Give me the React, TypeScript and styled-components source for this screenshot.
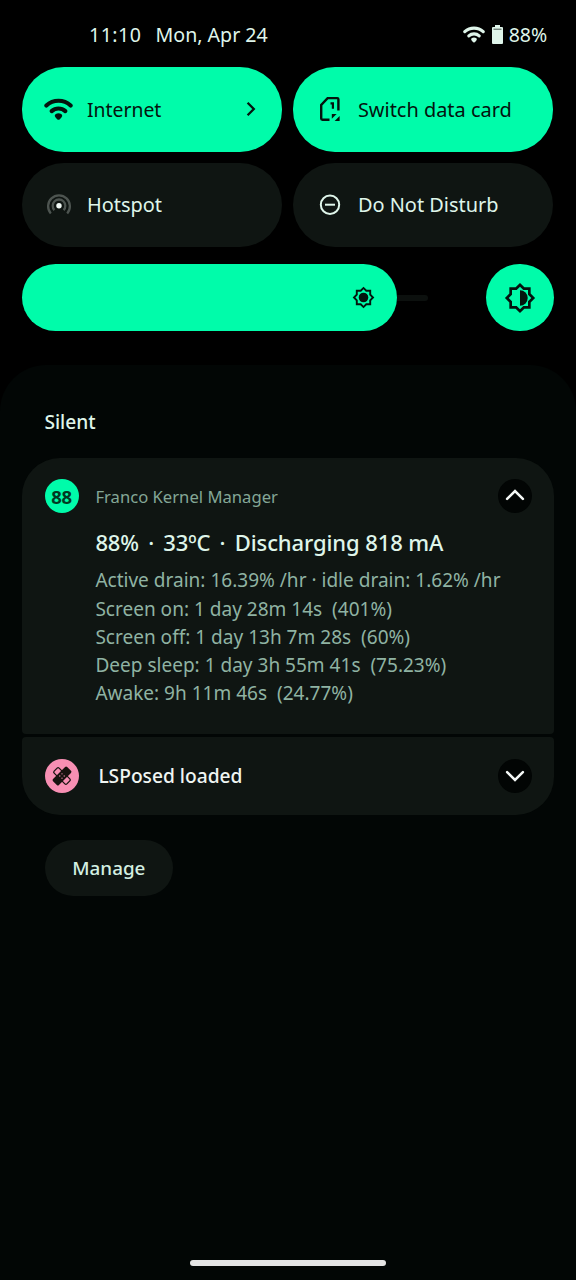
import React from 'react';
import styled, { createGlobalStyle } from 'styled-components';

const accent = '#00fcaa';
const surface = '#0f1512';
const ink = '#04140e';
const pale = '#dff5ea';

const GlobalStyle = createGlobalStyle`
  *, *::before, *::after { box-sizing: border-box; }
  body {
    margin: 0;
    background: #000;
    font-family: 'Noto Sans', 'Open Sans', sans-serif;
    color: ${pale};
  }
  svg { display: block; flex: none; }
`;

const Screen = styled.div`
  width: 576px;
  height: 1280px;
  display: flex;
  flex-direction: column;
  overflow: hidden;
  background: #000;
`;

const StatusBar = styled.header`
  height: 67px;
  padding: 2px 29px 0 89px;
  display: flex;
  align-items: center;
  font-size: 19.6px;
  line-height: 28px;
  white-space: nowrap;
`;

const Clock = styled.span`
  width: 66.5px;
  letter-spacing: 0.45px;
`;

const StatusIcons = styled.div`
  margin-left: auto;
  display: flex;
  align-items: center;
  gap: 7px;
`;

const BatteryGroup = styled.div`
  display: flex;
  align-items: center;
  gap: 6px;
  font-size: 19.5px;
  letter-spacing: -0.1px;
`;

const Tiles = styled.section`
  display: grid;
  grid-template-columns: 260px 260px;
  grid-template-rows: 84.5px 84px;
  column-gap: 11px;
  row-gap: 11.5px;
  padding-left: 22.4px;
`;

const Tile = styled.button<{ $on?: boolean }>`
  border: 0;
  border-radius: 42px;
  padding: 0 22px;
  display: flex;
  align-items: center;
  font-family: inherit;
  text-align: left;
  background: ${(p) => (p.$on ? accent : surface)};
  color: ${(p) => (p.$on ? ink : pale)};
`;

const TileIcon = styled.span`
  width: 29px;
  height: 30px;
  display: grid;
  place-items: center;
`;

const TileLabel = styled.span<{ $size?: number; $drop?: number }>`
  flex: 1;
  padding: ${(p) => p.$drop ?? 0}px 0 0 13.5px;
  font-size: ${(p) => p.$size ?? 19.95}px;
  line-height: 28px;
  white-space: nowrap;
`;

const BrightnessRow = styled.section`
  display: flex;
  align-items: center;
  height: 67px;
  margin-top: 17px;
  padding-left: 22.4px;
`;

const BrightnessFill = styled.div`
  width: 375px;
  height: 67px;
  border-radius: 34px;
  background: ${accent};
  display: flex;
  align-items: center;
  justify-content: flex-end;
  padding-right: 22px;
`;

const BrightnessTrack = styled.div`
  width: 30.5px;
  height: 6px;
  border-radius: 0 3px 3px 0;
  background: #0c100e;
`;

const AutoBrightness = styled.button`
  width: 67.4px;
  height: 67px;
  margin-left: 58.5px;
  padding: 0;
  border: 0;
  border-radius: 50%;
  background: ${accent};
  display: grid;
  place-items: center;
`;

const Shade = styled.main`
  flex: 1;
  margin-top: 34px;
  padding: 0 22.4px 14px;
  border-radius: 46px 46px 0 0;
  background: #020605;
  display: flex;
  flex-direction: column;
`;

const SectionTitle = styled.h2`
  margin: 43px 0 0 22px;
  height: 50px;
  font-size: 19.2px;
  line-height: 28px;
  font-weight: 500;
`;

const Notification = styled.article<{ $last?: boolean }>`
  display: flex;
  align-items: ${(p) => (p.$last ? 'center' : 'flex-start')};
  height: ${(p) => (p.$last ? '78px' : '276px')};
  padding: ${(p) => (p.$last ? '0 22px 0 22.2px' : '21.4px 22px 0 22.2px')};
  border-radius: ${(p) => (p.$last ? '4px 4px 38px 38px' : '38px 38px 4px 4px')};
  background: ${surface};
  & + & { margin-top: 2.6px; }
`;

const AppBadge = styled.div<{ $tone: string }>`
  width: 34px;
  height: 34px;
  flex: none;
  border-radius: 50%;
  display: grid;
  place-items: center;
  background: ${(p) => p.$tone};
  color: #023822;
  font-size: 18.5px;
  line-height: 33px;
  font-weight: 700;
  letter-spacing: -0.2px;
`;

const NotificationBody = styled.div`
  flex: 1;
  padding-left: 16.8px;
  white-space: pre;
`;

const AppName = styled.div`
  font-size: 16.65px;
  line-height: 35px;
  color: #84a797;
`;

const Headline = styled.div`
  margin-top: 11.1px;
  font-size: 22px;
  line-height: 34px;
  font-weight: 500;
  letter-spacing: -0.1px;
`;

const Dot = styled.span`
  margin: 0 3.6px;
`;

const Details = styled.div`
  margin-top: 6.8px;
  font-size: 19.05px;
  line-height: 28.3px;
  color: #8fb3a3;
`;

const ShortTitle = styled.div`
  padding: 1px 0 0 3px;
  font-size: 19.2px;
  line-height: 28px;
  font-weight: 500;
  color: #f0f5f2;
`;

const ExpandButton = styled.button<{ $open?: boolean }>`
  width: 34px;
  height: 34px;
  flex: none;
  margin-left: -34px;
  padding: ${(p) => (p.$open ? '0 0 2px' : '1px 0 0')};
  border: 0;
  border-radius: 50%;
  background: #020504;
  display: grid;
  place-items: center;
`;

const ManageButton = styled.button`
  width: 128.5px;
  height: 56px;
  margin: 25.3px 0 0 22.2px;
  padding: 0;
  border: 0;
  border-radius: 28px;
  background: ${surface};
  color: #d3efe1;
  font-family: inherit;
  font-size: 18.85px;
  line-height: 28px;
  font-weight: 500;
`;

const GestureBar = styled.div`
  width: 196px;
  height: 6px;
  margin: auto auto 0;
  border-radius: 3px;
  background: #e4e4e4;
`;

function WifiIcon({ width }: { width: number }) {
  return (
    <svg width={width} height={width * 0.79} viewBox="0 0 28 22" fill="none" stroke="currentColor" strokeWidth="4" strokeLinecap="round">
      <path d="M2.300 7.200a17.200 17.200 0 0 1 23.400 0" />
      <path d="M7.400 12.600a9.800 9.800 0 0 1 13.200 0" />
      <path d="M14 14.600c2 0 3.600.900 3.600 2.400 0 1-2.400 4-3.600 4s-3.600-3-3.600-4c0-1.500 1.600-2.400 3.600-2.400z" fill="currentColor" stroke="none" />
    </svg>
  );
}

function BatteryIcon() {
  return (
    <svg width="11" height="19" viewBox="0 0 11 19">
      <path d="M3 0h5v2h2q1 0 1 1v15q0 1-1 1H1q-1 0-1-1V3q0-1 1-1h2z" fill="#dff5ea" />
      <path d="M1.500 4.200h8" stroke="#48544e" strokeWidth="1" />
    </svg>
  );
}

function ChevronIcon({ dir }: { dir: 'up' | 'down' }) {
  return (
    <svg width="20" height="12" viewBox="0 0 20 12" fill="none" stroke="#f4f8f6" strokeWidth="2.500" strokeLinecap="round" strokeLinejoin="miter">
      <path d={dir === 'up' ? 'M2.100 9.900 10 2l7.900 7.900' : 'M2.100 2.100 10 10l7.900-7.900'} />
    </svg>
  );
}

function ArrowIcon() {
  return (
    <svg width="18" height="18" viewBox="0 0 18 18" fill="none" stroke="currentColor" strokeWidth="2.300">
      <path d="M5.600 2.800 11.800 9 5.600 15.200" />
    </svg>
  );
}

function SimSwitchIcon() {
  return (
    <svg width="22" height="26" viewBox="0 0 22 26" fill="none" stroke="currentColor" strokeWidth="2.400">
      <path d="M19.400 14.500V3.300q0-1.200-1.200-1.200H8.600L2.200 9v13.600q0 1.200 1.200 1.200h7.100" />
      <path d="M11.500 7.300h2.400v5.500" strokeWidth="2.200" />
      <path d="M12.800 18h4.800l-4.800 4.800z" fill="currentColor" stroke="none" />
      <path d="M20.600 20v5h-5z" fill="currentColor" stroke="none" />
    </svg>
  );
}

function HotspotIcon() {
  return (
    <svg width="26" height="24" viewBox="0 0 26 24" fill="none" stroke="#4d5450" strokeWidth="2.300">
      <path d="M4.800 20.400a10.900 10.900 0 1 1 16.400 0" />
      <path d="M8.400 17.100a6.300 6.300 0 1 1 9.200 0" />
      <circle cx="13" cy="12.700" r="2.700" fill="#f2faf6" stroke="none" />
    </svg>
  );
}

function DoNotDisturbIcon() {
  return (
    <svg width="22" height="22" viewBox="0 0 22 22" fill="none" stroke="currentColor" strokeWidth="2">
      <circle cx="11" cy="10.700" r="9.200" />
      <path d="M6 10.700h10" />
    </svg>
  );
}

const sunOutline = 'M20 8.690V4h-4.690L12 .690 8.690 4H4v4.690L.690 12 4 15.310V20h4.690L12 23.310 15.310 20H20v-4.690L23.310 12zm-2 5.790V18h-3.520L12 20.480 9.520 18H6v-3.520L3.520 12 6 9.520V6h3.520L12 3.520 14.480 6H18v3.520L20.480 12z';

function SunIcon() {
  return (
    <svg width="23" height="23" viewBox="0 0 24 24" fill={ink}>
      <path d={sunOutline} />
      <circle cx="12" cy="12" r="5" />
    </svg>
  );
}

function AutoSunIcon() {
  return (
    <svg width="32" height="32" viewBox="0 0 24 24" fill={ink}>
      <path d={sunOutline} />
      <path d="M12 6.200a5.800 5.800 0 0 1 0 11.600z" />
    </svg>
  );
}

function BandageIcon() {
  return (
    <svg width="24" height="24" viewBox="-12 -12 24 24" stroke="#17130f" fill="none" strokeWidth="1.300">
      <rect x="-9" y="-3.500" width="18" height="7" rx="1.400" transform="rotate(45)" />
      <rect x="-10" y="-4.200" width="20" height="8.400" rx="1.500" transform="rotate(-45)" fill="#17130f" stroke="none" />
      <g fill="#f78fb3" stroke="none">
        <circle cx="0" cy="-2.200" r="0.650" />
        <circle cx="0" cy="2.200" r="0.650" />
        <circle cx="-2.200" cy="0" r="0.650" />
        <circle cx="2.200" cy="0" r="0.650" />
      </g>
    </svg>
  );
}

const details = [
  'Active drain: 16.39% /hr · idle drain: 1.62% /hr',
  'Screen on: 1 day 28m 14s  (401%)',
  'Screen off: 1 day 13h 7m 28s  (60%)',
  'Deep sleep: 1 day 3h 55m 41s  (75.23%)',
  'Awake: 9h 11m 46s  (24.77%)',
];

export default function App() {
  return (
    <Screen>
      <GlobalStyle />
      <StatusBar>
        <Clock>11:10</Clock>
        <span>Mon, Apr 24</span>
        <StatusIcons>
          <WifiIcon width={22} />
          <BatteryGroup>
            <BatteryIcon />
            <span>88%</span>
          </BatteryGroup>
        </StatusIcons>
      </StatusBar>

      <Tiles>
        <Tile $on>
          <TileIcon><WifiIcon width={29} /></TileIcon>
          <TileLabel $size={19.4} $drop={2}>Internet</TileLabel>
          <ArrowIcon />
        </Tile>
        <Tile $on>
          <TileIcon><SimSwitchIcon /></TileIcon>
          <TileLabel $drop={2}>Switch data card</TileLabel>
        </Tile>
        <Tile>
          <TileIcon><HotspotIcon /></TileIcon>
          <TileLabel>Hotspot</TileLabel>
        </Tile>
        <Tile>
          <TileIcon><DoNotDisturbIcon /></TileIcon>
          <TileLabel>Do Not Disturb</TileLabel>
        </Tile>
      </Tiles>

      <BrightnessRow>
        <BrightnessFill><SunIcon /></BrightnessFill>
        <BrightnessTrack />
        <AutoBrightness><AutoSunIcon /></AutoBrightness>
      </BrightnessRow>

      <Shade>
        <SectionTitle>Silent</SectionTitle>
        <Notification>
          <AppBadge $tone={accent}>88</AppBadge>
          <NotificationBody>
            <AppName>Franco Kernel Manager</AppName>
            <Headline>
              88% <Dot>·</Dot> 33ºC <Dot>·</Dot> Discharging 818 mA
            </Headline>
            <Details>
              {details.map((line) => (
                <div key={line}>{line}</div>
              ))}
            </Details>
          </NotificationBody>
          <ExpandButton $open><ChevronIcon dir="up" /></ExpandButton>
        </Notification>
        <Notification $last>
          <AppBadge $tone="#f78fb3"><BandageIcon /></AppBadge>
          <NotificationBody>
            <ShortTitle>LSPosed loaded</ShortTitle>
          </NotificationBody>
          <ExpandButton><ChevronIcon dir="down" /></ExpandButton>
        </Notification>
        <ManageButton>Manage</ManageButton>
        <GestureBar />
      </Shade>
    </Screen>
  );
}
